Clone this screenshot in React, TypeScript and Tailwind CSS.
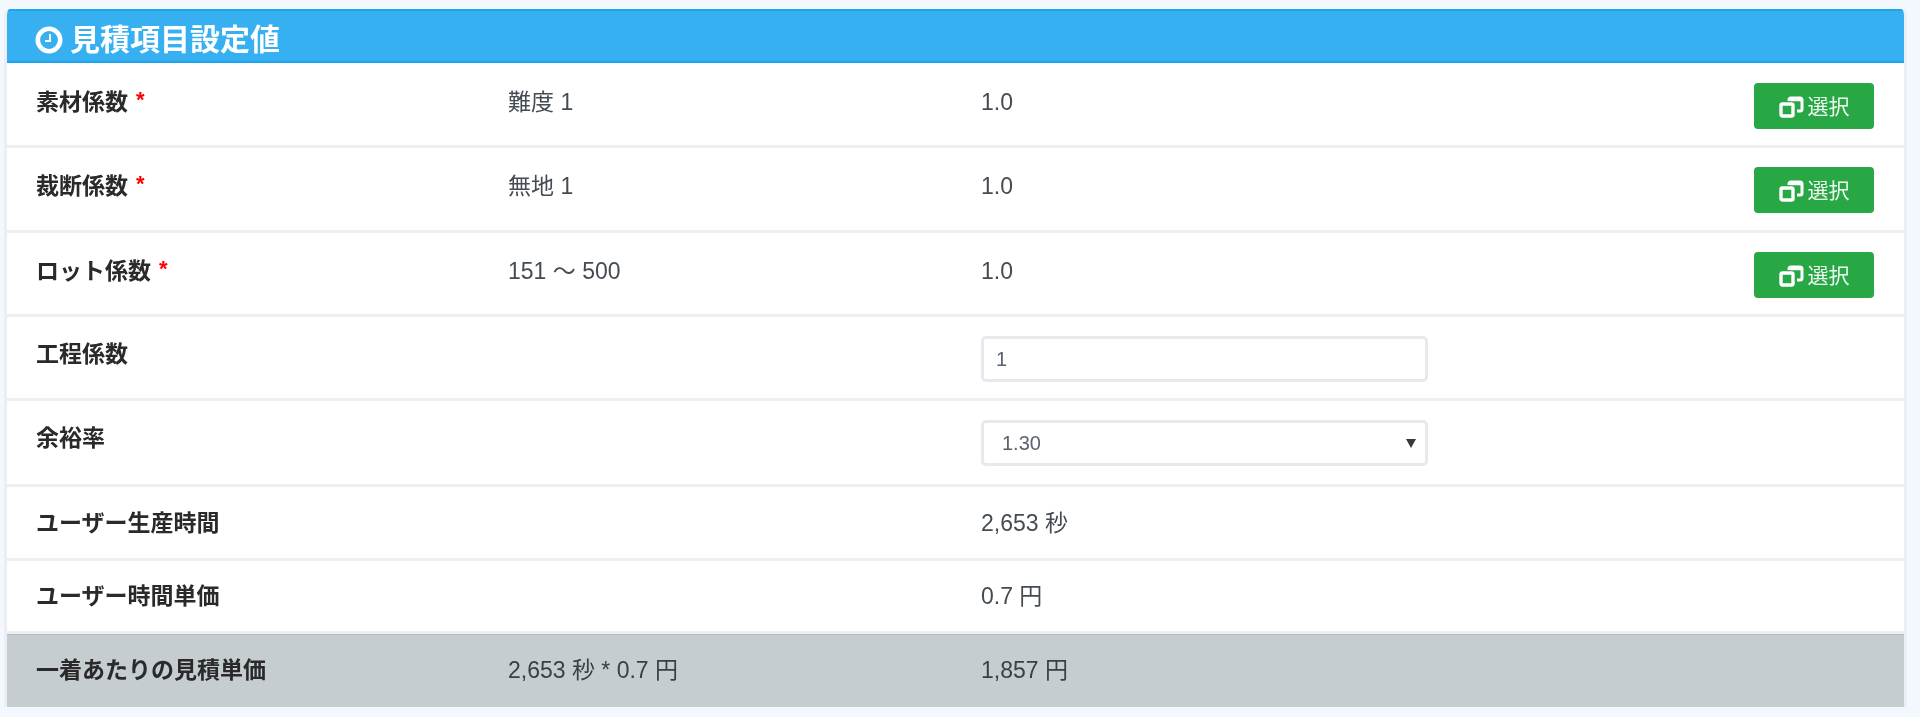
import React from "react";

const font = '"Liberation Sans", "Noto Sans CJK JP", sans-serif';

function Req() {
  return <span className="relative -top-[3px] ml-[8px] text-[22px] leading-none font-bold text-[#ff0000]">*</span>;
}

function SelectButton() {
  return (
    <button className="flex h-[46px] w-[120px] items-center justify-center gap-[4px] rounded-[4px] bg-[#28a745] pt-[2px] text-[21px] text-[#eef8f0]">
      <svg width="25" height="22" viewBox="0 0 25 22" fill="none" stroke="white">
        <rect x="2" y="8" width="12" height="12" rx="1.5" strokeWidth="3.4" />
        <path d="M10 5V4A2 2 0 0 1 12 2H21A2 2 0 0 1 23 4V13A2 2 0 0 1 21 15H18" strokeWidth="3" />
        <path d="M11 3.5H22" strokeWidth="3.6" />
      </svg>
      <span>選択</span>
    </button>
  );
}

type RowProps = {
  label: React.ReactNode;
  mid?: React.ReactNode;
  value?: React.ReactNode;
  right?: React.ReactNode;
  height: string;
  pad: string;
};

function Row({ label, mid, value, right, height, pad }: RowProps) {
  return (
    <div className={`flex items-start border-b-[3px] border-[#eceef1] pl-[29px] ${height} ${pad}`}>
      <div className="w-[472px] font-bold text-[#2a2a2a]">{label}</div>
      <div className="w-[473px] text-[#444b52]">{mid}</div>
      <div className="flex-1 text-[#444b52]">{value}</div>
      {right && <div className="mr-[30px] -mt-[2px]">{right}</div>}
    </div>
  );
}

export default function App() {
  return (
    <div className="min-h-[717px] bg-[#f2f8fd] pl-[4px] pr-[13px] pt-[9px]" style={{ fontFamily: font }}>
      <div className="h-[698px] overflow-hidden rounded-t-[6px] border-x-[3px] border-[#eceef1] bg-white text-[23px] leading-[34px] blur-[0.5px]">
        <div className="-mx-[3px] flex h-[54px] items-center gap-[7px] border-y-2 border-[#1fa5ee] bg-[#36b0f1] pl-[31px] pt-[8px] text-[30px] font-bold text-white">
          <svg width="28" height="28" viewBox="0 0 28 28" fill="none" stroke="white">
            <circle cx="14" cy="14" r="11.2" strokeWidth="4.6" />
            <path d="M15 8V15H10" strokeWidth="2" />
          </svg>
          <span>見積項目設定値</span>
        </div>
        <Row height="h-[85px]" pad="pt-[22px]" label={<>素材係数<Req /></>} mid="難度 1" value="1.0" right={<SelectButton />} />
        <Row height="h-[85px]" pad="pt-[21px]" label={<>裁断係数<Req /></>} mid="無地 1" value="1.0" right={<SelectButton />} />
        <Row height="h-[84px]" pad="pt-[21px]" label={<>ロット係数<Req /></>} mid="151 〜 500" value="1.0" right={<SelectButton />} />
        <Row
          height="h-[84px]"
          pad="pt-[20px]"
          label="工程係数"
          value={
            <div className="-mt-[1px] flex h-[46px] w-[447px] items-center rounded-[5px] border-[3px] border-[#e6e9ee] pl-[12px] text-[20px] text-[#5a6470]">
              1
            </div>
          }
        />
        <Row
          height="h-[86px]"
          pad="pt-[20px]"
          label="余裕率"
          value={
            <div className="-mt-[1px] flex h-[46px] w-[447px] items-center justify-between rounded-[5px] border-[3px] border-[#e6e9ee] pl-[18px] pr-[9px] text-[20px] text-[#5a6470]">
              <span>1.30</span>
              <svg width="10" height="9" viewBox="0 0 10 9" fill="#333a40">
                <path d="M0 0H10L5 9Z" />
              </svg>
            </div>
          }
        />
        <Row height="h-[74px]" pad="pt-[19px]" label="ユーザー生産時間" value="2,653 秒" />
        <Row height="h-[73px]" pad="pt-[18px]" label="ユーザー時間単価" value="0.7 円" />
        <div className="-mx-[3px] flex h-[76px] items-start border-y border-[#b4bcc2] bg-[#c5cdd1] pl-[32px] pt-[18px] text-[#3a3f44]">
          <div className="w-[472px] font-bold text-[#2a2a2a]">一着あたりの見積単価</div>
          <div className="w-[473px]">2,653 秒 * 0.7 円</div>
          <div>1,857 円</div>
        </div>
      </div>
    </div>
  );
}
